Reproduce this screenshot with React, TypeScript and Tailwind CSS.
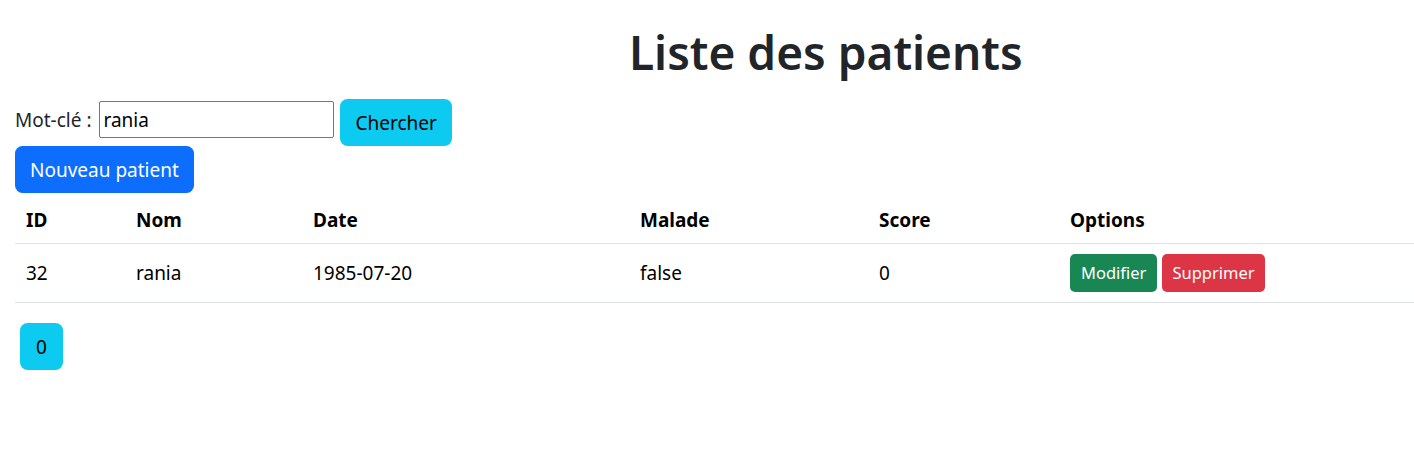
import React from "react";

const patients = [{ id: 32, nom: "rania", date: "1985-07-20", malade: "false", score: 0 }];

export default function App() {
  return (
    <div
      className="min-h-[457px] bg-white pl-[15px] text-[19px] leading-[30px] text-[#212529]"
      style={{ fontFamily: '"Noto Sans", "Open Sans", sans-serif' }}
    >
      {/* Title */}
      <h1 className="pt-[23px] pl-[614px] text-[46px] font-semibold leading-[58px] text-[#212529]">
        Liste des patients
      </h1>

      {/* Search */}
      <form className="mt-[18px] flex items-start" onSubmit={(e) => e.preventDefault()}>
        <label className="mr-[8px] mt-[6px]">Mot-clé :</label>
        <input
          defaultValue="rania"
          className="mt-[2px] h-[37px] w-[235px] rounded-[2px] border border-[#767676] px-[3px] text-[19px] text-black outline-none"
        />
        <button className="ml-[6px] h-[47px] rounded-[7.5px] bg-[#0dcaf0] px-[15px] text-black">
          Chercher
        </button>
      </form>

      <button className="h-[47px] rounded-[7.5px] bg-[#0d6efd] px-[15px] text-white">
        Nouveau patient
      </button>

      {/* Table */}
      <table className="w-[1399px] border-collapse text-left text-black">
        <thead>
          <tr className="border-b border-[#dee2e6]">
            <th className="w-[110px] px-[11px] pt-[12px] pb-[8px] font-bold">ID</th>
            <th className="w-[177px] px-[11px] pt-[12px] pb-[8px] font-bold">Nom</th>
            <th className="w-[327px] px-[11px] pt-[12px] pb-[8px] font-bold">Date</th>
            <th className="w-[239px] px-[11px] pt-[12px] pb-[8px] font-bold">Malade</th>
            <th className="w-[191px] px-[11px] pt-[12px] pb-[8px] font-bold">Score</th>
            <th className="px-[11px] pt-[12px] pb-[8px] font-bold">Options</th>
          </tr>
        </thead>
        <tbody>
          {patients.map((p) => (
            <tr key={p.id} className="border-b border-[#dee2e6]">
              <td className="px-[11px] py-[10px]">{p.id}</td>
              <td className="px-[11px] py-[10px]">{p.nom}</td>
              <td className="px-[11px] py-[10px]">{p.date}</td>
              <td className="px-[11px] py-[10px]">{p.malade}</td>
              <td className="px-[11px] py-[10px]">{p.score}</td>
              <td className="px-[11px] py-[10px]">
                <div className="flex gap-[5px]">
                  <button className="h-[38px] rounded-[5px] bg-[#198754] px-[11px] text-[16.5px] text-white">
                    Modifier
                  </button>
                  <button className="h-[38px] rounded-[5px] bg-[#dc3545] px-[10px] text-[16.5px] text-white">
                    Supprimer
                  </button>
                </div>
              </td>
            </tr>
          ))}
        </tbody>
      </table>

      {/* Pagination */}
      <div className="mt-[20px] pl-[5px]">
        <button className="h-[47px] rounded-[7.5px] bg-[#0dcaf0] px-[16px] text-black">0</button>
      </div>
    </div>
  );
}
